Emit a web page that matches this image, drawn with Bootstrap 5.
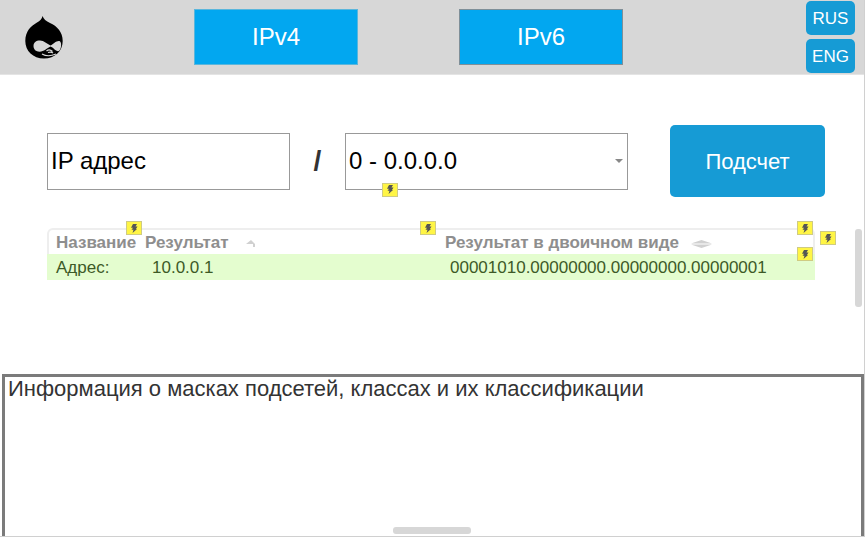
<!DOCTYPE html>
<html lang="ru">
<head>
<meta charset="utf-8">
<meta name="viewport" content="width=device-width, initial-scale=1">
<title>IP калькулятор</title>
<link href="https://cdn.jsdelivr.net/npm/bootstrap@5.3.0/dist/css/bootstrap.min.css" rel="stylesheet">
<style>
body{font-family:"Liberation Sans",Arial,sans-serif;color:#333;background:#fff}
.page{border:solid #d0d0d0;border-width:0 1px 1px 0}
.topbar{background:#d7d7d7;padding:0 9px 0 25px;height:75px;border-bottom:1px solid #e4e4e4}
.logo{margin-right:131px}
.versions{gap:101px}
.btn-version{width:164px;height:56px;padding:0;border-radius:0;font-size:24px;color:#fff;background:#02a7f0;border:1px solid #5ab6dc}
.btn-version.alt{border-color:#7f8f98}
.btn-version:hover,.btn-blue:hover{color:#fff;background:#0c8fcb}
.btn-blue{padding:0;color:#fff;background:#169bd5;border:0;border-radius:5px}
.langs{gap:4px}
.langs .btn{width:49px;height:34px;padding-top:2px;font-size:17px}
.calc{padding:50px 39px 0 47px}
.calc .field{height:57px;padding:0 3px;font-size:24px;color:#000;border:1px solid #999;border-radius:0}
.calc .form-control::placeholder{color:#000;opacity:1}
.address{flex:243 1 0}
.mask{flex:283 1 0}
.calc .form-select{background-image:url("data:image/svg+xml,%3Csvg xmlns='http://www.w3.org/2000/svg' viewBox='0 0 8 4'%3E%3Cpath d='M0 0h8L4 4z' fill='%23888'/%3E%3C/svg%3E");background-size:8px 4px;background-position:right 4px center}
.slash{width:55px;font-size:28px;font-weight:bold}
.btn-count{width:155px;height:72px;margin-left:42px;font-size:22px}
.results-zone{min-height:177px;padding:31px 49px 0 47px}
.frame{border:2px solid #eee;border-bottom:0;border-radius:6px 6px 0 0}
.result-table{table-layout:fixed;font-size:17px;line-height:24px;margin:-2px;width:calc(100% + 4px)}
.result-table th,.result-table td{position:relative;padding:2px 0 0;white-space:nowrap;text-align:left}
.result-table th{color:#8e8e8e;padding-top:4px;line-height:22px}
.result-table td{color:#3d5a27;background:#e4fdcf}
.result-table th:nth-child(1),.result-table td:nth-child(1){width:97px;padding-left:9px}
.result-table th:nth-child(2){width:294px;padding-left:1px}
.result-table td:nth-child(2){padding-left:8px}
.result-table th:nth-child(3){padding-left:7px}
.result-table td:nth-child(3){padding-left:12px}
.note{position:absolute;z-index:2;width:16px;height:14px;background:#fff545;border:1px solid #cfcb83;display:flex;align-items:center;justify-content:center}
.note-cell{right:2px;top:-7px}
.note-mask{left:37px;bottom:-7px}
.note-side{right:-23px;top:1px}
.sort{margin-left:12px}
.sort-up{margin-left:16px}
.thumb-v{right:2px;top:32px;width:7px;height:78px;border-radius:3px;background:#d7d7d7}
.thumb-h{left:50%;bottom:2px;width:78px;height:7px;border-radius:3px;background:#d7d7d7;transform:translateX(-50%)}
.info{margin:0 0 0 2px;border:3px solid #7b7b7b;border-bottom:0;padding:0 3px;font-size:22px;line-height:24px;color:#333;resize:none;border-radius:0;outline:0;background:#fff}
</style>
<script src="https://cdn.jsdelivr.net/npm/bootstrap@5.3.0/dist/js/bootstrap.bundle.min.js"></script>
</head>
<body>
<svg class="d-none" aria-hidden="true"><symbol id="bolt" viewBox="0 0 8 9"><path d="M3 0h4L5.500 2.500H7.500L6 5H7L2.500 9 3.500 5.800H1.500L3 3.800H1z" fill="#555"/></symbol></svg>
<div class="page d-flex flex-column min-vh-100 position-relative">
  <header class="topbar d-flex align-items-center">
    <a href="#" class="logo d-block lh-1" aria-label="Главная">
      <svg width="38" height="43" viewBox="0 0 38 43">
        <path d="M17.500 0C18.500 3 21 5 25 7C32 10 37.700 16 37.700 25C37.700 35 30 42.500 19 42.500C8 42.500 .3 35 .3 25C.3 15 6 10 12 6.500C15 4.800 17 3 17.500 0Z" fill="#000"/>
        <path d="M15 24.500C19 24.500 22 28 25.500 29.500C28.500 28 31 24.500 34.500 25C37 26 36.500 33 34 35C31 36 28.500 31.500 25.500 30.500C22 32 19 35.700 14.500 35.700C11 35.700 8.500 33.500 8.500 30C8.500 26.500 11 24.500 15 24.500Z" fill="#d7d7d7"/>
        <path d="M21.500 35Q24.500 32.300 27.500 35.500M17 38Q23 41.500 31 38M23 36.500Q26 35.500 28 37" fill="none" stroke="#d7d7d7" stroke-width="1.200"/>
      </svg>
    </a>
    <nav class="versions d-flex">
      <button type="button" class="btn btn-version">IPv4</button>
      <button type="button" class="btn btn-version alt">IPv6</button>
    </nav>
    <div class="langs d-flex flex-column ms-auto">
      <button type="button" class="btn btn-blue">RUS</button>
      <button type="button" class="btn btn-blue">ENG</button>
    </div>
  </header>

  <form class="calc d-flex align-items-center">
    <div class="address">
      <input type="text" class="form-control field" placeholder="IP адрес" aria-label="IP адрес">
    </div>
    <span class="slash text-center flex-shrink-0">/</span>
    <div class="mask position-relative">
      <select class="form-select field" aria-label="Маска"><option>0 - 0.0.0.0</option></select>
      <span class="note note-mask"><svg width="8" height="9"><use href="#bolt"/></svg></span>
    </div>
    <button type="button" class="btn btn-blue btn-count flex-shrink-0">Подсчет</button>
  </form>

  <section class="results-zone position-relative">
    <div class="frame position-relative">
      <table class="result-table">
        <thead>
          <tr>
            <th scope="col">Название<span class="note note-cell"><svg width="8" height="9"><use href="#bolt"/></svg></span></th>
            <th scope="col">Результат<svg class="sort-up" width="12" height="8"><path d="M1 4L6 0L10 4V7H8V4Z" fill="#d0d0d0"/></svg><span class="note note-cell"><svg width="8" height="9"><use href="#bolt"/></svg></span></th>
            <th scope="col">Результат в двоичном виде<svg class="sort" width="21" height="8"><path d="M0 3.500L10.500 0L21 3.500ZM0 4.500L10.500 8L21 4.500Z" fill="#d0d0d0"/></svg><span class="note note-cell"><svg width="8" height="9"><use href="#bolt"/></svg></span></th>
          </tr>
        </thead>
        <tbody>
          <tr>
            <td>Адрес:</td>
            <td>10.0.0.1</td>
            <td>00001010.00000000.00000000.00000001<span class="note note-cell"><svg width="8" height="9"><use href="#bolt"/></svg></span></td>
          </tr>
        </tbody>
      </table>
      <span class="note note-side"><svg width="8" height="9"><use href="#bolt"/></svg></span>
    </div>
    <span class="thumb-v position-absolute"></span>
  </section>

  <textarea class="info d-block flex-grow-1" aria-label="Информация" readonly>Информация о масках подсетей, классах и их классификации</textarea>
  <span class="thumb-h position-absolute"></span>
</div>
</body>
</html>
